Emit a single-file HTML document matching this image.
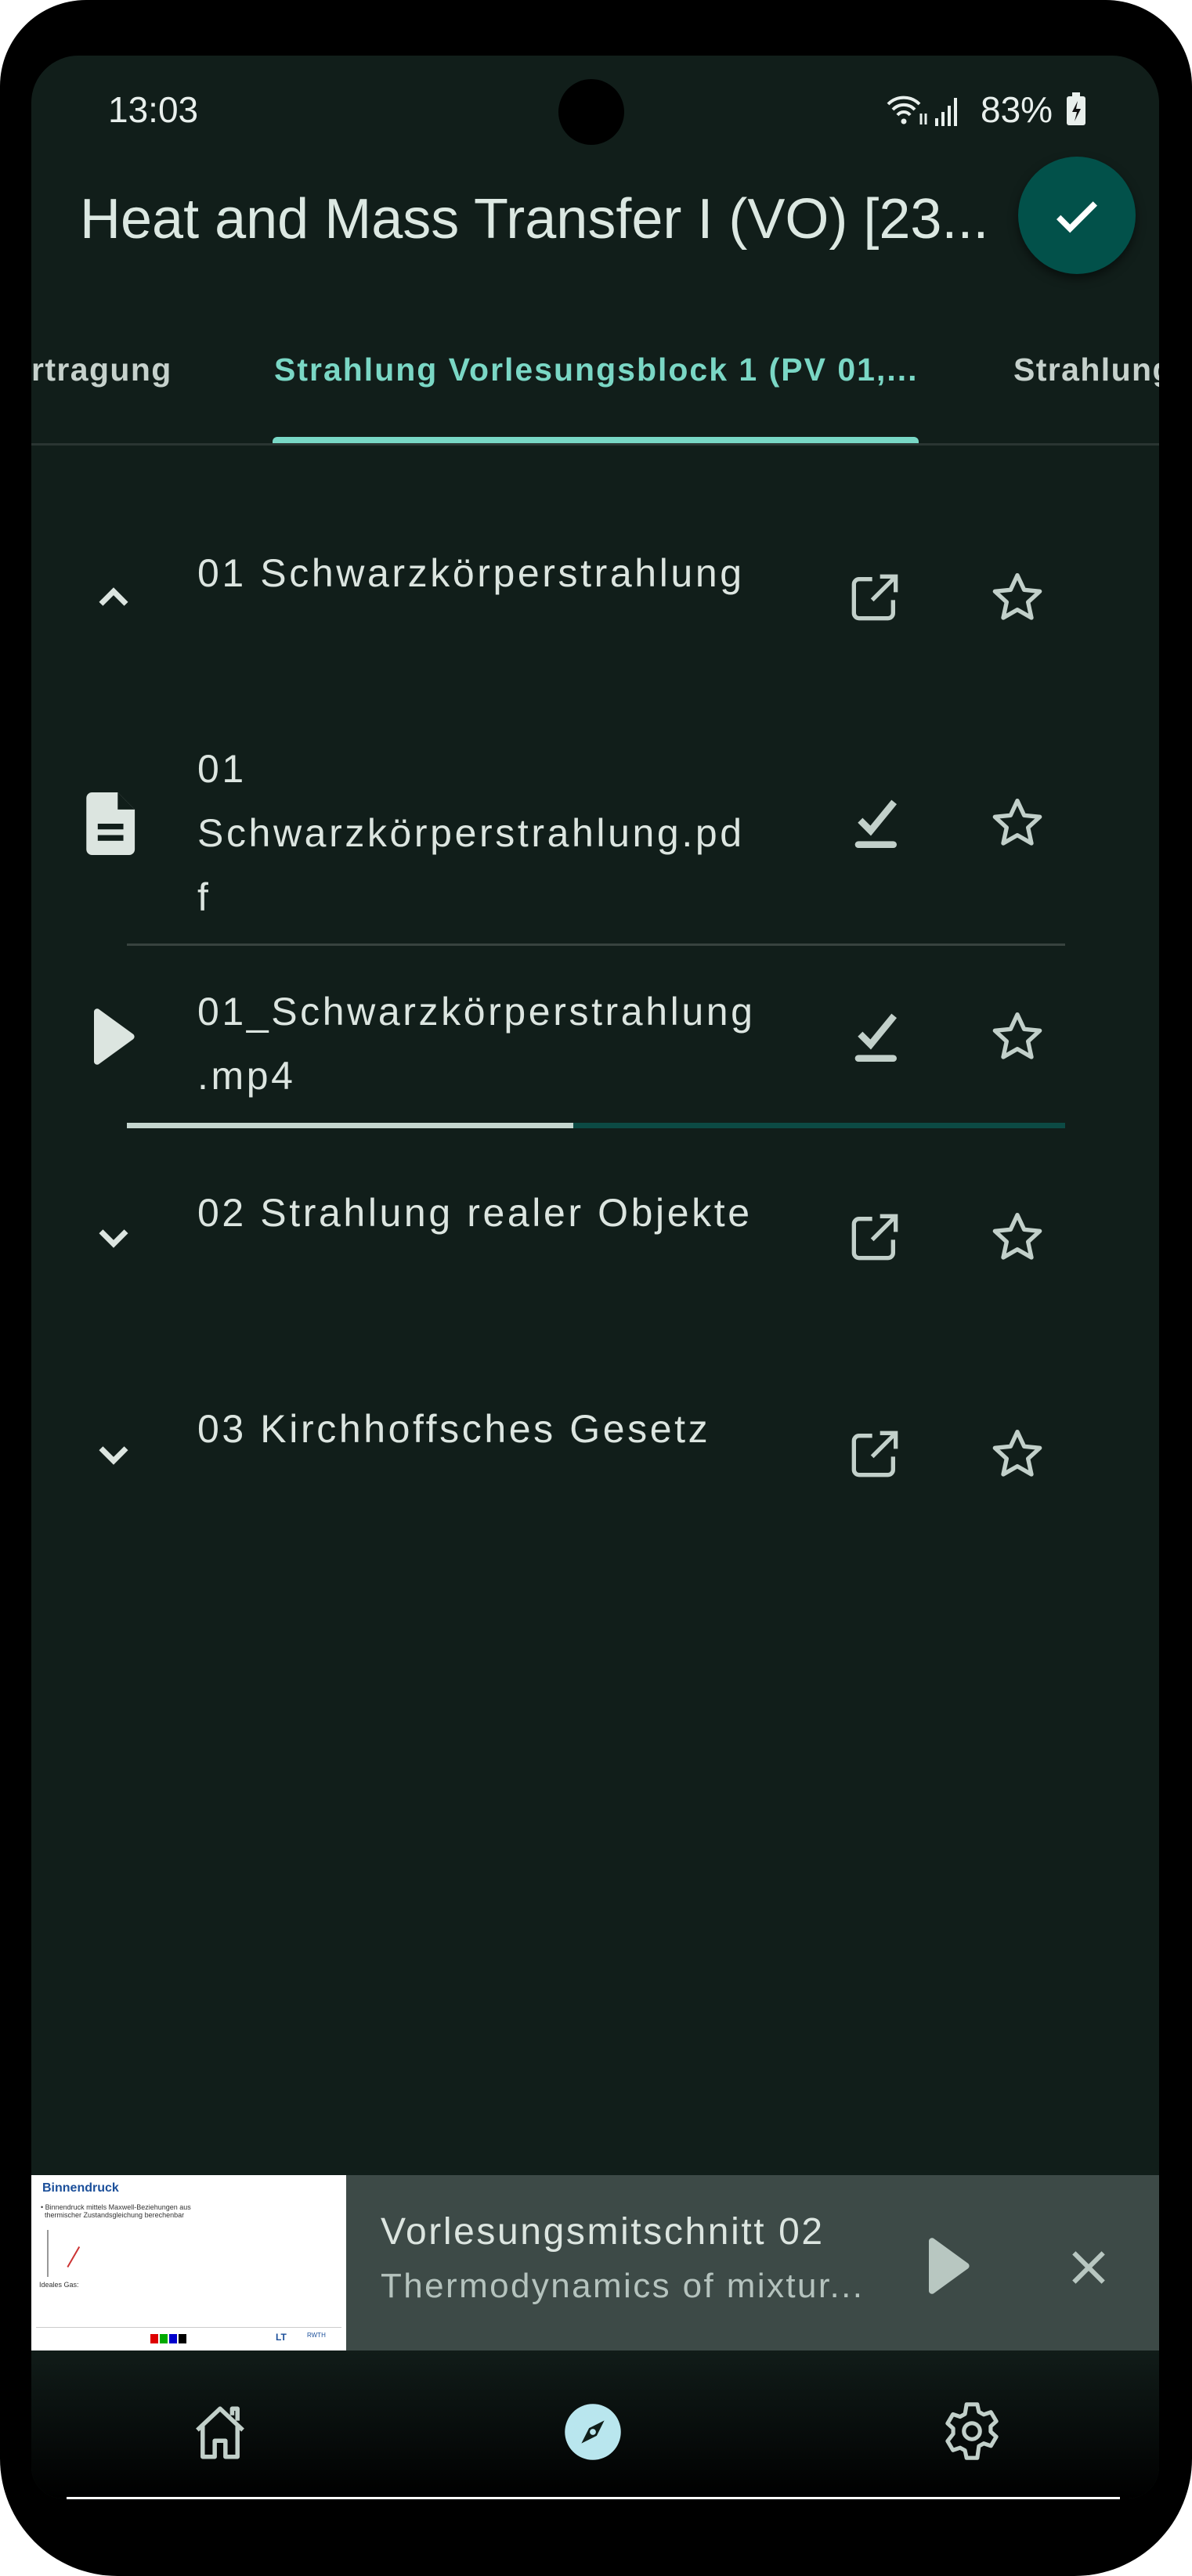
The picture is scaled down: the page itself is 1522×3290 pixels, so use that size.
<!DOCTYPE html>
<html><head><meta charset="utf-8"><style>
*{margin:0;padding:0;box-sizing:border-box}
body{width:1522px;height:3290px;background:#fff;position:relative;overflow:hidden;font-family:"Liberation Sans",sans-serif}
.phone{position:absolute;left:0;top:0;width:1522px;height:3290px;background:#000;border-radius:110px 110px 150px 150px}
.screen{position:absolute;left:40px;top:71px;width:1440px;height:3120px;background:#111e1a;border-radius:60px 60px 40px 40px;overflow:hidden}
.a{position:absolute;white-space:nowrap}
.t{color:#dce5e0;font-size:50px;letter-spacing:3.6px}
svg.i{position:absolute}
</style></head><body>
<div class="phone"></div>
<div class="screen">
  <div class="a" style="left:98px;top:42px;font-size:46px;color:#e8efec">13:03</div>
  <div class="a" style="left:673px;top:30px;width:84px;height:84px;border-radius:50%;background:#000"></div>
  <svg class="i" style="left:1090px;top:44px" width="110" height="50" viewBox="0 0 110 50"><path d="M4 18a28 28 0 0 1 40 0M10 25a19 19 0 0 1 28 0M16 32a10 10 0 0 1 16 0" stroke="#e8efec" stroke-width="4" fill="none"/><circle cx="24" cy="40" r="3.5" fill="#e8efec"/><path d="M46 30v14M52 30v14" stroke="#e8efec" stroke-width="3"/><rect x="64" y="36" width="4" height="10" fill="#e8efec"/><rect x="72" y="28" width="4" height="18" fill="#e8efec"/><rect x="80" y="20" width="4" height="26" fill="#e8efec"/><rect x="88" y="10" width="4" height="36" fill="#e8efec"/></svg>
  <div class="a" style="left:1212px;top:42px;font-size:46px;color:#e8efec">83%</div>
  <svg class="i" style="left:1320px;top:46px" width="28" height="44" viewBox="0 0 28 44"><rect x="2" y="6" width="24" height="37" rx="3" fill="#e8efec"/><rect x="9" y="1" width="10" height="6" fill="#e8efec"/><path d="M16 12l-7 14h6l-3 12 8-16h-6z" fill="#111"/></svg>

  <div class="a" style="left:62px;top:168px;font-size:72px;color:#dce8e2">Heat and Mass Transfer I (VO) [23...</div>
  <div class="a" style="left:1260px;top:129px;width:150px;height:150px;border-radius:50%;background:#02514a;box-shadow:0 6px 12px rgba(0,0,0,.5)"></div>
  <svg class="i" style="left:1300px;top:170px" width="70" height="70" viewBox="0 0 24 24"><path d="M4 12.5l5 5L20 6.5" stroke="#fff" stroke-width="2.6" fill="none"/></svg>

  <div class="a" style="left:0;top:378px;font-size:41px;color:#c6d1cc;font-weight:bold;letter-spacing:1.4px">rtragung</div>
  <div class="a" style="left:310px;top:378px;font-size:41px;color:#7ad7c5;font-weight:bold;letter-spacing:2px">Strahlung Vorlesungsblock 1 (PV 01,...</div>
  <div class="a" style="left:1254px;top:378px;font-size:41px;color:#c6d1cc;font-weight:bold;letter-spacing:1.4px">Strahlung</div>
  <div class="a" style="left:308px;top:487px;width:825px;height:10px;background:#79d8c6;border-radius:6px 6px 0 0"></div>
  <div class="a" style="left:0;top:495px;width:1440px;height:3px;background:#2a3532"></div>

  <!-- row1 -->
  <svg class="i" style="left:70px;top:658px" width="70" height="70" viewBox="0 0 24 24"><path d="M6.5 14.5L12 9l5.5 5.5" stroke="#dce5e0" stroke-width="2.4" fill="none"/></svg>
  <div class="a t" style="left:212px;top:632px">01 Schwarzkörperstrahlung</div>
  <svg class="i" style="left:1037px;top:652px" width="80" height="80" viewBox="0 0 24 24"><path d="M11 5H6a2 2 0 0 0-2 2v11a2 2 0 0 0 2 2h11a2 2 0 0 0 2-2v-5M14 4h6v6M20 4L11 13" stroke="#c2d0ca" stroke-width="1.6" fill="none"/></svg>
  <svg class="i" style="left:1219px;top:652px" width="80" height="80" viewBox="0 0 24 24"><path d="M12 3.5l2.6 5.6 6 .6-4.5 4.1 1.3 6-5.4-3.1-5.4 3.1 1.3-6L3.4 9.7l6-.6z" stroke="#c2d0ca" stroke-width="1.6" fill="none" stroke-linejoin="round"/></svg>

  <!-- row2 -->
  <svg class="i" style="left:70px;top:941px" width="66" height="80" viewBox="0 0 18 22"><path d="M2 0h9l6 6v14a2 2 0 0 1-2 2H2a2 2 0 0 1-2-2V2a2 2 0 0 1 2-2z" fill="#dce5e0"/><path d="M11 0v6h6" fill="#111e1a"/><rect x="4" y="11" width="9" height="2" fill="#111e1a"/><rect x="4" y="15" width="9" height="2" fill="#111e1a"/></svg>
  <div class="a t" style="left:212px;top:870px;line-height:82px">01<br>Schwarzkörperstrahlung.pd<br>f</div>
  <svg class="i" style="left:1045px;top:940px" width="70" height="80" viewBox="0 0 21 24"><path d="M4 11l4 4 9-11" stroke="#c2d0ca" stroke-width="2.6" fill="none"/><rect x="2" y="19" width="16" height="2.6" rx="1.3" fill="#c2d0ca"/></svg>
  <svg class="i" style="left:1219px;top:940px" width="80" height="80" viewBox="0 0 24 24"><path d="M12 3.5l2.6 5.6 6 .6-4.5 4.1 1.3 6-5.4-3.1-5.4 3.1 1.3-6L3.4 9.7l6-.6z" stroke="#c2d0ca" stroke-width="1.6" fill="none" stroke-linejoin="round"/></svg>
  <div class="a" style="left:122px;top:1134px;width:1198px;height:3px;background:#38433f"></div>

  <!-- row3 -->
  <svg class="i" style="left:76px;top:1213px" width="60" height="80" viewBox="0 0 15 20"><path d="M1 2v16a1 1 0 0 0 1.5.8l11-8a1 1 0 0 0 0-1.6l-11-8A1 1 0 0 0 1 2z" fill="#dce5e0"/></svg>
  <div class="a t" style="left:212px;top:1180px;line-height:82px">01_Schwarzkörperstrahlung<br>.mp4</div>
  <svg class="i" style="left:1045px;top:1213px" width="70" height="80" viewBox="0 0 21 24"><path d="M4 11l4 4 9-11" stroke="#c2d0ca" stroke-width="2.6" fill="none"/><rect x="2" y="19" width="16" height="2.6" rx="1.3" fill="#c2d0ca"/></svg>
  <svg class="i" style="left:1219px;top:1213px" width="80" height="80" viewBox="0 0 24 24"><path d="M12 3.5l2.6 5.6 6 .6-4.5 4.1 1.3 6-5.4-3.1-5.4 3.1 1.3-6L3.4 9.7l6-.6z" stroke="#c2d0ca" stroke-width="1.6" fill="none" stroke-linejoin="round"/></svg>
  <div class="a" style="left:122px;top:1363px;width:1198px;height:7px;background:#0c4a44"></div>
  <div class="a" style="left:122px;top:1363px;width:570px;height:7px;background:#c5d6cf"></div>

  <!-- row4 -->
  <svg class="i" style="left:70px;top:1474px" width="70" height="70" viewBox="0 0 24 24"><path d="M6.5 9.5L12 15l5.5-5.5" stroke="#dce5e0" stroke-width="2.4" fill="none"/></svg>
  <div class="a t" style="left:212px;top:1449px">02 Strahlung realer Objekte</div>
  <svg class="i" style="left:1037px;top:1469px" width="80" height="80" viewBox="0 0 24 24"><path d="M11 5H6a2 2 0 0 0-2 2v11a2 2 0 0 0 2 2h11a2 2 0 0 0 2-2v-5M14 4h6v6M20 4L11 13" stroke="#c2d0ca" stroke-width="1.6" fill="none"/></svg>
  <svg class="i" style="left:1219px;top:1469px" width="80" height="80" viewBox="0 0 24 24"><path d="M12 3.5l2.6 5.6 6 .6-4.5 4.1 1.3 6-5.4-3.1-5.4 3.1 1.3-6L3.4 9.7l6-.6z" stroke="#c2d0ca" stroke-width="1.6" fill="none" stroke-linejoin="round"/></svg>

  <!-- row5 -->
  <svg class="i" style="left:70px;top:1751px" width="70" height="70" viewBox="0 0 24 24"><path d="M6.5 9.5L12 15l5.5-5.5" stroke="#dce5e0" stroke-width="2.4" fill="none"/></svg>
  <div class="a t" style="left:212px;top:1725px">03 Kirchhoffsches Gesetz</div>
  <svg class="i" style="left:1037px;top:1746px" width="80" height="80" viewBox="0 0 24 24"><path d="M11 5H6a2 2 0 0 0-2 2v11a2 2 0 0 0 2 2h11a2 2 0 0 0 2-2v-5M14 4h6v6M20 4L11 13" stroke="#c2d0ca" stroke-width="1.6" fill="none"/></svg>
  <svg class="i" style="left:1219px;top:1746px" width="80" height="80" viewBox="0 0 24 24"><path d="M12 3.5l2.6 5.6 6 .6-4.5 4.1 1.3 6-5.4-3.1-5.4 3.1 1.3-6L3.4 9.7l6-.6z" stroke="#c2d0ca" stroke-width="1.6" fill="none" stroke-linejoin="round"/></svg>

  <!-- mini player -->
  <div class="a" style="left:0;top:2707px;width:1440px;height:224px;background:#3d4a47"></div>
  <div class="a" style="left:0;top:2707px;width:402px;height:224px;background:#fff;overflow:hidden">
    <div class="a" style="left:14px;top:8px;font-size:16px;color:#1b4f9a;font-weight:bold">Binnendruck</div>
    <div class="a" style="left:12px;top:36px;font-size:9px;color:#333">• Binnendruck mittels Maxwell-Beziehungen aus<br>&nbsp;&nbsp;thermischer Zustandsgleichung berechenbar</div>
    <div class="a" style="left:20px;top:70px;width:50px;height:60px;border-left:2px solid #999"></div>
    <div class="a" style="left:36px;top:85px;width:20px;height:30px;border-right:2px solid #c33;transform:rotate(30deg)"></div>
    <div class="a" style="left:10px;top:135px;font-size:9px;color:#333">Ideales Gas:</div>
    <div class="a" style="left:6px;top:194px;width:390px;height:1px;background:#ccc"></div>
    <div class="a" style="left:152px;top:203px;width:10px;height:12px;background:#d00"></div>
    <div class="a" style="left:164px;top:203px;width:10px;height:12px;background:#0a0"></div>
    <div class="a" style="left:176px;top:203px;width:10px;height:12px;background:#00c"></div>
    <div class="a" style="left:188px;top:203px;width:10px;height:12px;background:#000"></div>
    <div class="a" style="left:312px;top:200px;font-size:12px;color:#1b4f9a;font-weight:bold">LT</div>
    <div class="a" style="left:352px;top:200px;font-size:8px;color:#1b4f9a">RWTH</div>
  </div>
  <div class="a" style="left:446px;top:2752px;font-size:48px;color:#dce5e0;letter-spacing:2.6px">Vorlesungsmitschnitt 02</div>
  <div class="a" style="left:446px;top:2824px;font-size:44px;color:#b5c3be;letter-spacing:2.4px">Thermodynamics of mixtur...</div>
  <svg class="i" style="left:1142px;top:2783px" width="60" height="80" viewBox="0 0 15 20"><path d="M1 2v16a1 1 0 0 0 1.5.8l11-8a1 1 0 0 0 0-1.6l-11-8A1 1 0 0 0 1 2z" fill="#b8c7c1"/></svg>
  <svg class="i" style="left:1322px;top:2797px" width="56" height="56" viewBox="0 0 24 24"><path d="M4 4l16 16M20 4L4 20" stroke="#b8c7c1" stroke-width="2.6"/></svg>

  <!-- nav -->
  <div class="a" style="left:0;top:2931px;width:1440px;height:189px;background:linear-gradient(#111c19,#000)"></div>
  <svg class="i" style="left:200px;top:2995px" width="82" height="82" viewBox="0 0 24 24"><path d="M3.5 11L12 3l8.5 8M5.5 9.5V21h4.5v-6h4v6h4.5V9.5M16.5 5.5V3h2v4.5" stroke="#c2d0ca" stroke-width="1.6" fill="none" stroke-linejoin="round"/></svg>
  <svg class="i" style="left:678px;top:2996px" width="78" height="78" viewBox="0 0 24 24"><circle cx="12" cy="12" r="11" fill="#b9e6ee"/><path d="M16.5 7.5l-3 6-6 3 3-6z" fill="#111e1a"/><circle cx="12" cy="12" r="1.2" fill="#b9e6ee"/></svg>
  <svg class="i" style="left:1160px;top:2993px" width="82" height="82" viewBox="0 0 24 24"><path d="M10 2h4l.6 2.8 1.8 1 2.7-.9 2 3.4-2.1 1.9v2l2.1 1.9-2 3.4-2.7-.9-1.8 1L14 22h-4l-.6-2.8-1.8-1-2.7.9-2-3.4L5 13v-2L2.9 9.1l2-3.4 2.7.9 1.8-1z" stroke="#c2d0ca" stroke-width="1.5" fill="none" stroke-linejoin="round"/><circle cx="12" cy="12" r="3" stroke="#c2d0ca" stroke-width="1.5" fill="none"/></svg>
</div>
<div class="a" style="left:85px;top:3189px;width:1345px;height:3px;background:#fff"></div>
</body></html>
